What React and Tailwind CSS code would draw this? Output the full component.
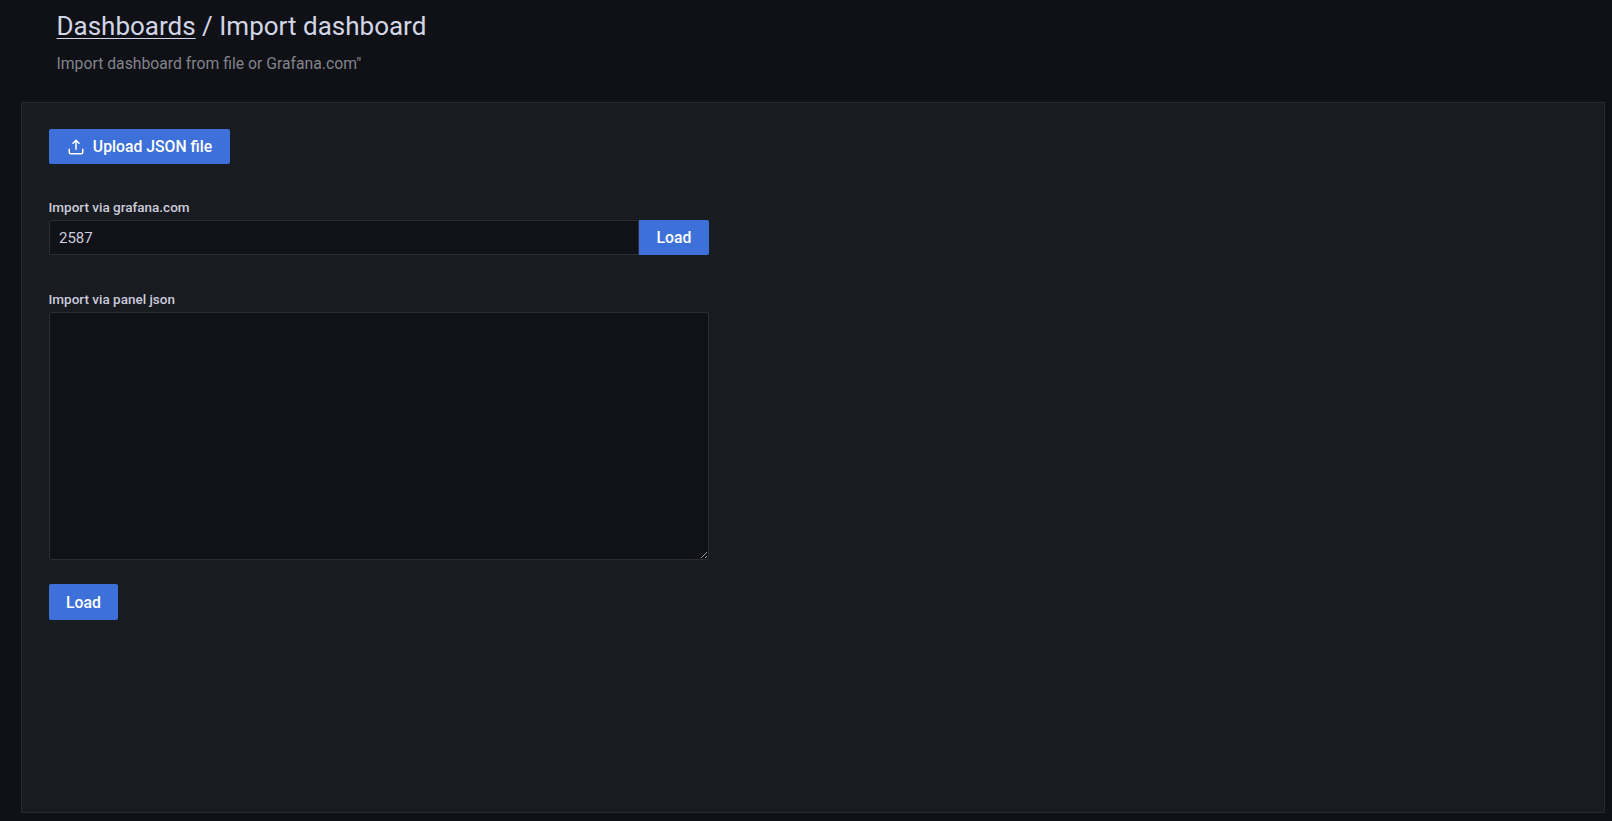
import React from 'react';

const PRIMARY_BTN = 'flex items-center justify-center rounded-[2px] bg-[#3d71d9] text-white text-[15.75px] font-medium';
const LABEL = "text-[13.5px] leading-[14px] font-medium text-[#ccccdc] -ml-[0.5px]";

function UploadIcon() {
  return (
    <svg viewBox="0 0 24 24" className="w-[18px] h-[18px] mr-[8px]" fill="currentColor">
      <path d="M8.71 7.71 11 5.41V15a1 1 0 0 0 2 0V5.41l2.29 2.3a1 1 0 0 0 1.42 0 1 1 0 0 0 0-1.42l-4-4a1 1 0 0 0-.33-.21 1 1 0 0 0-.76 0 1 1 0 0 0-.33.21l-4 4a1 1 0 1 0 1.42 1.42ZM21 14a1 1 0 0 0-1 1v4a1 1 0 0 1-1 1H5a1 1 0 0 1-1-1v-4a1 1 0 0 0-2 0v4a3 3 0 0 0 3 3h14a3 3 0 0 0 3-3v-4a1 1 0 0 0-1-1Z" />
    </svg>
  );
}

export default function App() {
  return (
    <div className="h-[821px] overflow-hidden bg-[#101116] pl-[21px] pr-[7px] font-['Roboto',sans-serif]">
      {/* page header */}
      <div className="h-[102px] pl-[35.5px] pt-[8px]">
        <h1 className="text-[26px] leading-[36px] font-normal text-[#d3d6e6]">
          <a className="underline underline-offset-[3px] decoration-1">Dashboards</a> / Import dashboard
        </h1>
        <p className="mt-[10px] text-[15.75px] leading-[20px] text-[#82838c]">
          Import dashboard from file or Grafana.com"
        </p>
      </div>

      {/* form panel */}
      <div className="h-[711px] border border-[#26292e] bg-[#181b1f] pl-[27px] pt-[26px]">
        <button className={`${PRIMARY_BTN} h-[35px] w-[181px]`}>
          <UploadIcon />
          Upload JSON file
        </button>

        <div className="mt-[36px] mb-[6px] h-[14px] flex items-center">
          <label className={LABEL}>Import via grafana.com</label>
        </div>
        <div className="flex w-[660px]">
          <input
            readOnly
            value="2587"
            className="flex-1 min-w-0 h-[35px] rounded-l-[2px] border border-[#2b2d33] bg-[#111217] px-[9px] text-[15px] text-[#ccccdc] outline-none"
          />
          <button className={`${PRIMARY_BTN} h-[35px] w-[70px] rounded-l-none`}>Load</button>
        </div>

        <div className="mt-[37px] mb-[6px] h-[14px] flex items-center">
          <label className={LABEL}>Import via panel json</label>
        </div>
        <textarea
          readOnly
          className="block w-[660px] h-[248px] rounded-[2px] border border-[#2b2d33] bg-[#111217] outline-none"
        />

        <button className={`${PRIMARY_BTN} h-[36px] w-[69px] mt-6 pt-[2px]`}>Load</button>
      </div>
    </div>
  );
}
